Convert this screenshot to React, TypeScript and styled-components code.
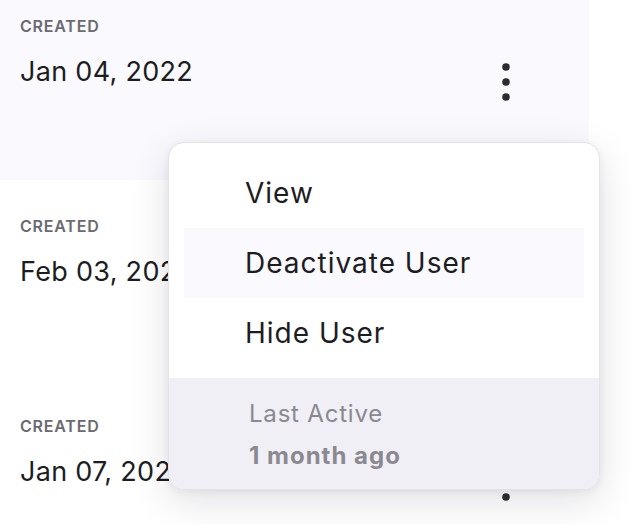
import styled, { createGlobalStyle } from 'styled-components';

const GlobalStyle = createGlobalStyle`
  * {
    box-sizing: border-box;
  }

  body {
    margin: 0;
    font-family: Inter, "Noto Sans", sans-serif;
    background-color: #ffffff;
    color: #1d1d1f;
    -webkit-font-smoothing: antialiased;
  }
`;

const rows = [
  { created: 'Jan 04, 2022', active: true },
  { created: 'Feb 03, 2022', active: false },
  { created: 'Jan 07, 2022', active: false },
];

const menuItems = ['View', 'Deactivate User', 'Hide User'];

const KebabIcon = () => (
  <svg width="8" height="38" viewBox="0 0 8 38" aria-hidden="true">
    <circle cx="4" cy="4" r="3.8" fill="#2c2c30" />
    <circle cx="4" cy="19" r="3.8" fill="#2c2c30" />
    <circle cx="4" cy="34" r="3.8" fill="#2c2c30" />
  </svg>
);

const App = () => {
  return (
    <>
      <GlobalStyle />
      <PageLayout>
        <RowList>
          {rows.map((row) => (
            <Row key={row.created} $active={row.active}>
              <InfoBox>
                <LabelText>Created</LabelText>
                <DateText>{row.created}</DateText>
              </InfoBox>
              <KebabButton type="button" aria-label="More actions">
                <KebabIcon />
              </KebabButton>
            </Row>
          ))}
        </RowList>

        <Menu role="menu">
          <MenuList>
            {menuItems.map((item) => (
              <MenuItem key={item} role="menuitem" $hovered={item === 'Deactivate User'}>
                {item}
              </MenuItem>
            ))}
          </MenuList>
          <MenuFooter>
            <FooterLabel>Last Active</FooterLabel>
            <FooterValue>1 month ago</FooterValue>
          </MenuFooter>
        </Menu>
      </PageLayout>
    </>
  );
};

const PageLayout = styled.div`
  position: relative;
  width: 632px;
  height: 524px;
  overflow: hidden;
`;

const RowList = styled.ul`
  display: flex;
  flex-direction: column;
  row-gap: 20px;
  width: 589px;
  margin: 0;
  padding: 0;
  list-style: none;
`;

const Row = styled.li<{ $active: boolean }>`
  display: flex;
  justify-content: space-between;
  align-items: flex-start;
  height: 180px;
  padding: 16px 65px 0 20px;
  background-color: ${({ $active }) => ($active ? '#f9f9fe' : '#ffffff')};
`;

const InfoBox = styled.div`
  display: flex;
  flex-direction: column;
`;

const LabelText = styled.span`
  font-size: 16px;
  font-weight: 600;
  line-height: 20px;
  letter-spacing: 0.8px;
  text-transform: uppercase;
  color: #6a6a70;
`;

const DateText = styled.span`
  margin-top: 18px;
  font-size: 27px;
  line-height: 36px;
  letter-spacing: 0.3px;
  color: #1d1d1f;
`;

const KebabButton = styled.button`
  display: flex;
  align-items: center;
  justify-content: center;
  width: 36px;
  height: 56px;
  margin-top: 38px;
  padding: 0;
  border: 0;
  background: none;
  cursor: pointer;
`;

const Menu = styled.div`
  position: absolute;
  top: 142px;
  left: 168px;
  width: 432px;
  overflow: hidden;
  border: 1px solid #e4e4e8;
  border-radius: 16px;
  background-color: #ffffff;
  box-shadow:
    0 12px 40px rgba(20, 20, 40, 0.12),
    0 2px 8px rgba(20, 20, 40, 0.06);
`;

const MenuList = styled.ul`
  margin: 0;
  padding: 15px 15px 10px;
  list-style: none;
`;

const MenuItem = styled.li<{ $hovered: boolean }>`
  display: flex;
  align-items: center;
  height: 70px;
  padding-left: 61px;
  font-size: 28px;
  letter-spacing: 1px;
  color: #1d1d1f;
  background-color: ${({ $hovered }) => ($hovered ? '#f9f9fe' : 'transparent')};
  cursor: pointer;
`;

const MenuFooter = styled.div`
  display: flex;
  flex-direction: column;
  row-gap: 8px;
  padding: 19px 0 16px 80px;
  background-color: #f0eff5;
`;

const FooterLabel = styled.span`
  font-size: 24px;
  line-height: 34px;
  letter-spacing: 0.8px;
  color: #8a8990;
`;

const FooterValue = styled.span`
  font-size: 24px;
  font-weight: 700;
  line-height: 34px;
  letter-spacing: 1px;
  color: #8a8990;
`;

export default App;
